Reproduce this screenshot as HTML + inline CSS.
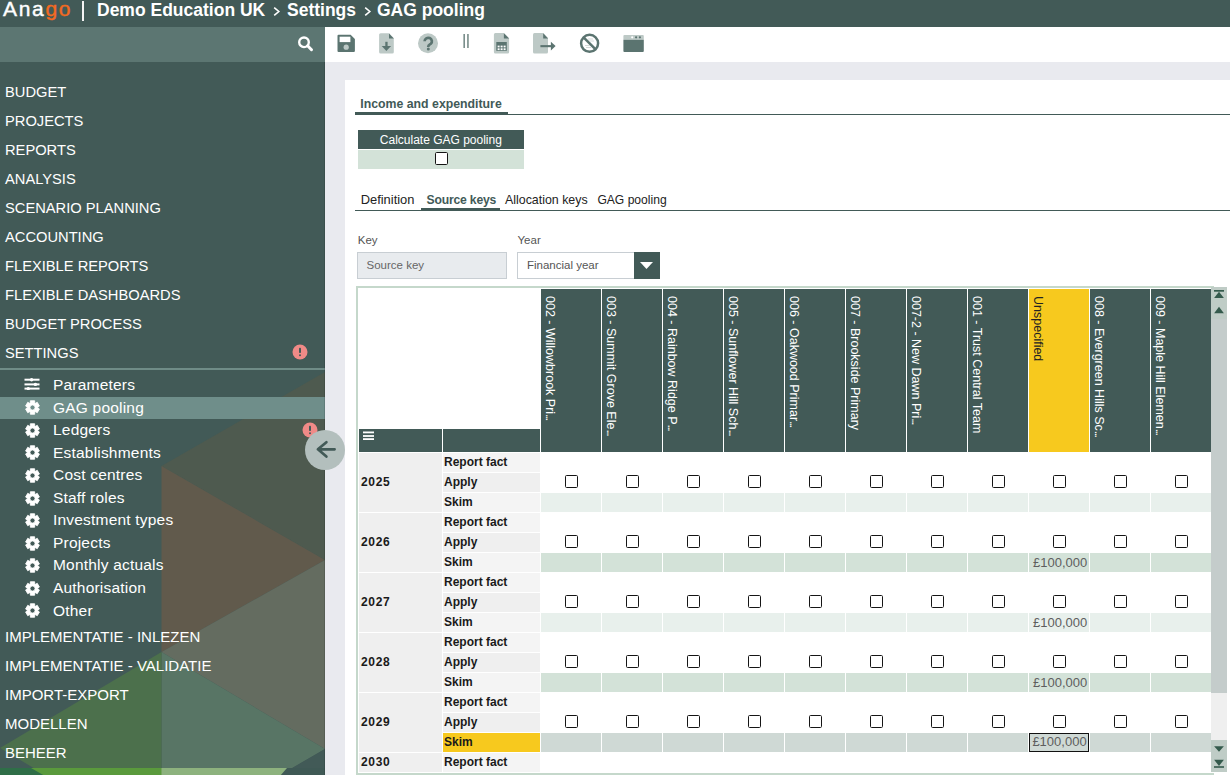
<!DOCTYPE html>
<html><head><meta charset="utf-8"><style>
*{box-sizing:border-box}
html,body{margin:0;padding:0}
body{width:1230px;height:775px;overflow:hidden;position:relative;font-family:"Liberation Sans",sans-serif;background:#fff;color:#222}
.a{position:absolute}
.t{position:absolute;white-space:nowrap;line-height:1}
.sx{transform-origin:0 0}
.cb{position:absolute;width:13px;height:13px;border:1.4px solid #151515;border-radius:1.6px;background:#fff}
</style></head><body>

<div class="a" style="left:0;top:0;width:1230px;height:27px;background:#425a57"></div>
<div class="t" style="left:3px;top:-2.24px;font-size:21.0px;font-weight:normal;color:#fff;letter-spacing:1.7px;-webkit-text-stroke:0.4px #fff">Ana<span style="color:#f26a22;-webkit-text-stroke:0.4px #f26a22">go</span></div>
<div class="a" style="left:82.3px;top:1.3px;width:1.8px;height:19.5px;background:#f4f4f4"></div>
<div class="t" style="left:97px;top:1.60px;font-size:17.5px;font-weight:bold;color:#fff;">Demo Education UK</div>
<svg class="a" style="left:272.5px;top:6px" width="8" height="11" viewBox="0 0 8 11"><path d="M1.2 1.6 L5.8 5.5 L1.2 9.4" fill="none" stroke="#fff" stroke-width="1.6"/></svg>
<div class="t" style="left:287px;top:1.60px;font-size:17.5px;font-weight:bold;color:#fff;">Settings</div>
<svg class="a" style="left:363.5px;top:6px" width="8" height="11" viewBox="0 0 8 11"><path d="M1.2 1.6 L5.8 5.5 L1.2 9.4" fill="none" stroke="#fff" stroke-width="1.6"/></svg>
<div class="t" style="left:377px;top:1.60px;font-size:17.5px;font-weight:bold;color:#fff;">GAG pooling</div>
<div class="a" style="left:0;top:27px;width:325px;height:748px;background:#425a57;overflow:hidden">
<svg class="a" style="left:0;top:-27px" width="325" height="775" viewBox="0 0 325 775">
<polygon points="161.5,466 325,372 325,560" fill="#4e5a4f"/>
<polygon points="161.5,466 325,560 161.5,652" fill="#615a4c"/>
<polygon points="161.5,652 325,560 325,749" fill="#646c60"/>
<polygon points="161.5,652 325,749 161.5,844" fill="#587565"/>
<polygon points="325,749 161.5,844 325,938" fill="#425a57"/>
<polygon points="161.5,652 0,748 161.5,844" fill="#4c704c"/>
<rect x="0" y="768" width="325" height="8" fill="#5a9a3c"/>
<polygon points="0,768 31,768 45,776 0,776" fill="#2f6e48"/>
<rect x="161.5" y="768" width="164" height="8" fill="#8db27e"/>
<polygon points="287,768 325,768 325,776 280,776" fill="#3f5955"/>
</svg>
</div>
<div class="a" style="left:0;top:27px;width:325px;height:35px;background:#5c7672"></div>
<svg class="a" style="left:294px;top:33px" width="22" height="22" viewBox="0 0 22 22"><circle cx="10" cy="9.3" r="4.8" fill="none" stroke="#fff" stroke-width="2.4"/><line x1="13.6" y1="12.8" x2="17.5" y2="16.7" stroke="#fff" stroke-width="3" stroke-linecap="round"/></svg>
<div class="t" style="left:5px;top:85.46px;font-size:14.7px;font-weight:normal;color:#fff;">BUDGET</div>
<div class="t" style="left:5px;top:114.46px;font-size:14.7px;font-weight:normal;color:#fff;">PROJECTS</div>
<div class="t" style="left:5px;top:143.46px;font-size:14.7px;font-weight:normal;color:#fff;">REPORTS</div>
<div class="t" style="left:5px;top:172.46px;font-size:14.7px;font-weight:normal;color:#fff;">ANALYSIS</div>
<div class="t" style="left:5px;top:201.46px;font-size:14.7px;font-weight:normal;color:#fff;">SCENARIO PLANNING</div>
<div class="t" style="left:5px;top:230.46px;font-size:14.7px;font-weight:normal;color:#fff;">ACCOUNTING</div>
<div class="t" style="left:5px;top:259.46px;font-size:14.7px;font-weight:normal;color:#fff;">FLEXIBLE REPORTS</div>
<div class="t" style="left:5px;top:288.46px;font-size:14.7px;font-weight:normal;color:#fff;">FLEXIBLE DASHBOARDS</div>
<div class="t" style="left:5px;top:317.46px;font-size:14.7px;font-weight:normal;color:#fff;">BUDGET PROCESS</div>
<div class="t" style="left:5px;top:346.46px;font-size:14.7px;font-weight:normal;color:#fff;">SETTINGS</div>
<svg class="a" style="left:292.3px;top:344.4px" width="16" height="16" viewBox="0 0 16 16"><circle cx="8" cy="8" r="7.5" fill="#f08a87"/><rect x="7" y="3.8" width="2" height="5.2" rx="0.8" fill="#425a57"/><rect x="7" y="10.2" width="2" height="2" rx="1" fill="#425a57"/></svg>
<div class="a" style="left:0;top:368px;width:325px;height:2px;background:#6f8c87"></div>
<div class="a" style="left:0;top:397px;width:325px;height:22px;background:#6f8e8a"></div>
<div class="t" style="left:53px;top:377.05px;font-size:15.5px;font-weight:normal;color:#fff;letter-spacing:0.2px">Parameters</div>
<svg class="a" style="left:24px;top:376.9px" width="16" height="13" viewBox="0 0 16 13"><g fill="#fff"><rect x="0.5" y="1.7" width="15" height="2"/><rect x="0.5" y="6.4" width="15" height="2"/><rect x="0.5" y="10.6" width="15" height="2"/><circle cx="7.6" cy="2.7" r="1.7"/><circle cx="11.4" cy="7.4" r="1.7"/><circle cx="4.3" cy="11.6" r="1.7"/></g></svg>
<div class="t" style="left:53px;top:399.60px;font-size:15.5px;font-weight:normal;color:#fff;letter-spacing:0.2px">GAG pooling</div>
<svg class="a" style="left:24.6px;top:400.3px" width="15" height="15" viewBox="0 0 14 14"><path fill="#fff" fill-rule="evenodd" stroke="#fff" stroke-width="0.8" stroke-linejoin="round" d="M11.97 7.57 L13.46 8.37 L11.42 11.90 L9.98 11.01 L8.99 11.59 L9.04 13.28 L4.96 13.28 L5.01 11.59 L4.02 11.01 L2.58 11.90 L0.54 8.37 L2.03 7.57 L2.03 6.43 L0.54 5.63 L2.58 2.10 L4.02 2.99 L5.01 2.41 L4.96 0.72 L9.04 0.72 L8.99 2.41 L9.98 2.99 L11.42 2.10 L13.46 5.63 L11.97 6.43Z M9.40 7.00 a2.4 2.4 0 1 0 -4.80 0 a2.4 2.4 0 1 0 4.80 0Z"/></svg>
<div class="t" style="left:53px;top:422.15px;font-size:15.5px;font-weight:normal;color:#fff;letter-spacing:0.2px">Ledgers</div>
<svg class="a" style="left:24.6px;top:422.9px" width="15" height="15" viewBox="0 0 14 14"><path fill="#fff" fill-rule="evenodd" stroke="#fff" stroke-width="0.8" stroke-linejoin="round" d="M11.97 7.57 L13.46 8.37 L11.42 11.90 L9.98 11.01 L8.99 11.59 L9.04 13.28 L4.96 13.28 L5.01 11.59 L4.02 11.01 L2.58 11.90 L0.54 8.37 L2.03 7.57 L2.03 6.43 L0.54 5.63 L2.58 2.10 L4.02 2.99 L5.01 2.41 L4.96 0.72 L9.04 0.72 L8.99 2.41 L9.98 2.99 L11.42 2.10 L13.46 5.63 L11.97 6.43Z M9.40 7.00 a2.4 2.4 0 1 0 -4.80 0 a2.4 2.4 0 1 0 4.80 0Z"/></svg>
<div class="t" style="left:53px;top:444.70px;font-size:15.5px;font-weight:normal;color:#fff;letter-spacing:0.2px">Establishments</div>
<svg class="a" style="left:24.6px;top:445.4px" width="15" height="15" viewBox="0 0 14 14"><path fill="#fff" fill-rule="evenodd" stroke="#fff" stroke-width="0.8" stroke-linejoin="round" d="M11.97 7.57 L13.46 8.37 L11.42 11.90 L9.98 11.01 L8.99 11.59 L9.04 13.28 L4.96 13.28 L5.01 11.59 L4.02 11.01 L2.58 11.90 L0.54 8.37 L2.03 7.57 L2.03 6.43 L0.54 5.63 L2.58 2.10 L4.02 2.99 L5.01 2.41 L4.96 0.72 L9.04 0.72 L8.99 2.41 L9.98 2.99 L11.42 2.10 L13.46 5.63 L11.97 6.43Z M9.40 7.00 a2.4 2.4 0 1 0 -4.80 0 a2.4 2.4 0 1 0 4.80 0Z"/></svg>
<div class="t" style="left:53px;top:467.25px;font-size:15.5px;font-weight:normal;color:#fff;letter-spacing:0.2px">Cost centres</div>
<svg class="a" style="left:24.6px;top:468.0px" width="15" height="15" viewBox="0 0 14 14"><path fill="#fff" fill-rule="evenodd" stroke="#fff" stroke-width="0.8" stroke-linejoin="round" d="M11.97 7.57 L13.46 8.37 L11.42 11.90 L9.98 11.01 L8.99 11.59 L9.04 13.28 L4.96 13.28 L5.01 11.59 L4.02 11.01 L2.58 11.90 L0.54 8.37 L2.03 7.57 L2.03 6.43 L0.54 5.63 L2.58 2.10 L4.02 2.99 L5.01 2.41 L4.96 0.72 L9.04 0.72 L8.99 2.41 L9.98 2.99 L11.42 2.10 L13.46 5.63 L11.97 6.43Z M9.40 7.00 a2.4 2.4 0 1 0 -4.80 0 a2.4 2.4 0 1 0 4.80 0Z"/></svg>
<div class="t" style="left:53px;top:489.80px;font-size:15.5px;font-weight:normal;color:#fff;letter-spacing:0.2px">Staff roles</div>
<svg class="a" style="left:24.6px;top:490.5px" width="15" height="15" viewBox="0 0 14 14"><path fill="#fff" fill-rule="evenodd" stroke="#fff" stroke-width="0.8" stroke-linejoin="round" d="M11.97 7.57 L13.46 8.37 L11.42 11.90 L9.98 11.01 L8.99 11.59 L9.04 13.28 L4.96 13.28 L5.01 11.59 L4.02 11.01 L2.58 11.90 L0.54 8.37 L2.03 7.57 L2.03 6.43 L0.54 5.63 L2.58 2.10 L4.02 2.99 L5.01 2.41 L4.96 0.72 L9.04 0.72 L8.99 2.41 L9.98 2.99 L11.42 2.10 L13.46 5.63 L11.97 6.43Z M9.40 7.00 a2.4 2.4 0 1 0 -4.80 0 a2.4 2.4 0 1 0 4.80 0Z"/></svg>
<div class="t" style="left:53px;top:512.35px;font-size:15.5px;font-weight:normal;color:#fff;letter-spacing:0.2px">Investment types</div>
<svg class="a" style="left:24.6px;top:513.1px" width="15" height="15" viewBox="0 0 14 14"><path fill="#fff" fill-rule="evenodd" stroke="#fff" stroke-width="0.8" stroke-linejoin="round" d="M11.97 7.57 L13.46 8.37 L11.42 11.90 L9.98 11.01 L8.99 11.59 L9.04 13.28 L4.96 13.28 L5.01 11.59 L4.02 11.01 L2.58 11.90 L0.54 8.37 L2.03 7.57 L2.03 6.43 L0.54 5.63 L2.58 2.10 L4.02 2.99 L5.01 2.41 L4.96 0.72 L9.04 0.72 L8.99 2.41 L9.98 2.99 L11.42 2.10 L13.46 5.63 L11.97 6.43Z M9.40 7.00 a2.4 2.4 0 1 0 -4.80 0 a2.4 2.4 0 1 0 4.80 0Z"/></svg>
<div class="t" style="left:53px;top:534.90px;font-size:15.5px;font-weight:normal;color:#fff;letter-spacing:0.2px">Projects</div>
<svg class="a" style="left:24.6px;top:535.6px" width="15" height="15" viewBox="0 0 14 14"><path fill="#fff" fill-rule="evenodd" stroke="#fff" stroke-width="0.8" stroke-linejoin="round" d="M11.97 7.57 L13.46 8.37 L11.42 11.90 L9.98 11.01 L8.99 11.59 L9.04 13.28 L4.96 13.28 L5.01 11.59 L4.02 11.01 L2.58 11.90 L0.54 8.37 L2.03 7.57 L2.03 6.43 L0.54 5.63 L2.58 2.10 L4.02 2.99 L5.01 2.41 L4.96 0.72 L9.04 0.72 L8.99 2.41 L9.98 2.99 L11.42 2.10 L13.46 5.63 L11.97 6.43Z M9.40 7.00 a2.4 2.4 0 1 0 -4.80 0 a2.4 2.4 0 1 0 4.80 0Z"/></svg>
<div class="t" style="left:53px;top:557.45px;font-size:15.5px;font-weight:normal;color:#fff;letter-spacing:0.2px">Monthly actuals</div>
<svg class="a" style="left:24.6px;top:558.2px" width="15" height="15" viewBox="0 0 14 14"><path fill="#fff" fill-rule="evenodd" stroke="#fff" stroke-width="0.8" stroke-linejoin="round" d="M11.97 7.57 L13.46 8.37 L11.42 11.90 L9.98 11.01 L8.99 11.59 L9.04 13.28 L4.96 13.28 L5.01 11.59 L4.02 11.01 L2.58 11.90 L0.54 8.37 L2.03 7.57 L2.03 6.43 L0.54 5.63 L2.58 2.10 L4.02 2.99 L5.01 2.41 L4.96 0.72 L9.04 0.72 L8.99 2.41 L9.98 2.99 L11.42 2.10 L13.46 5.63 L11.97 6.43Z M9.40 7.00 a2.4 2.4 0 1 0 -4.80 0 a2.4 2.4 0 1 0 4.80 0Z"/></svg>
<div class="t" style="left:53px;top:580.00px;font-size:15.5px;font-weight:normal;color:#fff;letter-spacing:0.2px">Authorisation</div>
<svg class="a" style="left:24.6px;top:580.8px" width="15" height="15" viewBox="0 0 14 14"><path fill="#fff" fill-rule="evenodd" stroke="#fff" stroke-width="0.8" stroke-linejoin="round" d="M11.97 7.57 L13.46 8.37 L11.42 11.90 L9.98 11.01 L8.99 11.59 L9.04 13.28 L4.96 13.28 L5.01 11.59 L4.02 11.01 L2.58 11.90 L0.54 8.37 L2.03 7.57 L2.03 6.43 L0.54 5.63 L2.58 2.10 L4.02 2.99 L5.01 2.41 L4.96 0.72 L9.04 0.72 L8.99 2.41 L9.98 2.99 L11.42 2.10 L13.46 5.63 L11.97 6.43Z M9.40 7.00 a2.4 2.4 0 1 0 -4.80 0 a2.4 2.4 0 1 0 4.80 0Z"/></svg>
<div class="t" style="left:53px;top:602.55px;font-size:15.5px;font-weight:normal;color:#fff;letter-spacing:0.2px">Other</div>
<svg class="a" style="left:24.6px;top:603.3px" width="15" height="15" viewBox="0 0 14 14"><path fill="#fff" fill-rule="evenodd" stroke="#fff" stroke-width="0.8" stroke-linejoin="round" d="M11.97 7.57 L13.46 8.37 L11.42 11.90 L9.98 11.01 L8.99 11.59 L9.04 13.28 L4.96 13.28 L5.01 11.59 L4.02 11.01 L2.58 11.90 L0.54 8.37 L2.03 7.57 L2.03 6.43 L0.54 5.63 L2.58 2.10 L4.02 2.99 L5.01 2.41 L4.96 0.72 L9.04 0.72 L8.99 2.41 L9.98 2.99 L11.42 2.10 L13.46 5.63 L11.97 6.43Z M9.40 7.00 a2.4 2.4 0 1 0 -4.80 0 a2.4 2.4 0 1 0 4.80 0Z"/></svg>
<svg class="a" style="left:302.2px;top:421.5px" width="16" height="16" viewBox="0 0 16 16"><circle cx="8" cy="8" r="7.5" fill="#f08a87"/><rect x="7" y="3.8" width="2" height="5.2" rx="0.8" fill="#425a57"/><rect x="7" y="10.2" width="2" height="2" rx="1" fill="#425a57"/></svg>
<div class="t" style="left:5px;top:629.26px;font-size:15.0px;font-weight:normal;color:#fff;">IMPLEMENTATIE - INLEZEN</div>
<div class="t" style="left:5px;top:658.26px;font-size:15.0px;font-weight:normal;color:#fff;">IMPLEMENTATIE - VALIDATIE</div>
<div class="t" style="left:5px;top:687.26px;font-size:15.0px;font-weight:normal;color:#fff;">IMPORT-EXPORT</div>
<div class="t" style="left:5px;top:716.26px;font-size:15.0px;font-weight:normal;color:#fff;">MODELLEN</div>
<div class="t" style="left:5px;top:745.26px;font-size:15.0px;font-weight:normal;color:#fff;">BEHEER</div>
<div class="a" style="left:324px;top:62px;width:1px;height:713px;background:rgba(0,0,0,0.12)"></div>
<div class="a" style="left:325px;top:62px;width:905px;height:713px;background:#e9eaef"></div>
<div class="a" style="left:345px;top:80px;width:885px;height:695px;background:#fff"></div>
<svg class="a" style="left:325px;top:27px" width="340" height="35" viewBox="325 27 340 35">
<path d="M338.5 34.8 H350.6 L354.9 39 V51 a1 1 0 0 1 -1 1 H338.5 a1 1 0 0 1 -1 -1 V35.8 a1 1 0 0 1 1 -1z" fill="#5b7470"/>
<rect x="339.6" y="36.7" width="10.8" height="5.4" fill="#fff"/>
<circle cx="346.2" cy="47.2" r="2.6" fill="#bdc9c6"/>
<path d="M380.6 33.2 H389 L393.8 38.2 V52.1 a1.5 1.5 0 0 1 -1.5 1.5 H380.6 a1.5 1.5 0 0 1 -1.5 -1.5 V34.7 a1.5 1.5 0 0 1 1.5 -1.5z" fill="#bdc9c6"/>
<path d="M389 33.4 V38.6 H393.8z" fill="#5b7470"/>
<rect x="385.3" y="41.8" width="2.3" height="4.6" fill="#5b7470"/>
<path d="M381.7 46.1 H391.1 L386.4 50.9z" fill="#5b7470"/>
<circle cx="428" cy="43.3" r="10" fill="#bdc9c6"/>
<rect x="463.5" y="34" width="1.3" height="14" fill="#5b7470"/>
<rect x="467.3" y="34" width="1.3" height="14" fill="#5b7470"/>
<path d="M495.4 33.1 H503.9 L509.1 38.3 V52.1 a1.5 1.5 0 0 1 -1.5 1.5 H495.4 a1.5 1.5 0 0 1 -1.5 -1.5 V34.6 a1.5 1.5 0 0 1 1.5 -1.5z" fill="#bdc9c6"/>
<path d="M503.9 33.3 V38.5 H509.1z" fill="#5b7470"/>
<rect x="496.3" y="42" width="10.5" height="8.8" fill="#5b7470"/>
<g fill="#fff"><rect x="497.6" y="45.6" width="2" height="1.8"/><rect x="500.6" y="45.6" width="2" height="1.8"/><rect x="503.6" y="45.6" width="2" height="1.8"/><rect x="497.6" y="48.3" width="2" height="1.8"/><rect x="500.6" y="48.3" width="2" height="1.8"/><rect x="503.6" y="48.3" width="2" height="1.8"/></g>
<path d="M534.5 33.1 H543.2 L548 38.1 V52.1 a1.5 1.5 0 0 1 -1.5 1.5 H534.5 a1.5 1.5 0 0 1 -1.5 -1.5 V34.6 a1.5 1.5 0 0 1 1.5 -1.5z" fill="#bdc9c6"/>
<path d="M543.2 33.3 V38.5 H548z" fill="#5b7470"/>
<rect x="540.4" y="45.1" width="10.8" height="2.1" fill="#5b7470"/>
<path d="M550.9 41.7 L555.6 46.1 L550.9 50.5z" fill="#5b7470"/>
<circle cx="589.6" cy="43.3" r="8.5" fill="none" stroke="#5b7470" stroke-width="2.5"/>
<line x1="583.6" y1="37.3" x2="595.6" y2="49.3" stroke="#5b7470" stroke-width="2.5"/>
<g stroke="#c9d1cf" stroke-width="0.8"><line x1="588" y1="39" x2="593" y2="39"/><line x1="589" y1="41" x2="594" y2="41"/><line x1="585" y1="45.5" x2="590" y2="45.5"/><line x1="586" y1="47.5" x2="591" y2="47.5"/></g>
<path d="M624.4 34.9 H642.8 a1 1 0 0 1 1 1 V39.8 H623.4 V35.9 a1 1 0 0 1 1 -1z" fill="#bdc9c6"/>
<path d="M623.4 39.8 H643.8 V50.9 a1 1 0 0 1 -1 1 H624.4 a1 1 0 0 1 -1 -1z" fill="#5b7470"/>
<circle cx="632.2" cy="37.3" r="1.1" fill="#fff"/><circle cx="636.1" cy="37.3" r="1.1" fill="#5b7470"/><circle cx="639.9" cy="37.3" r="1.1" fill="#5b7470"/>
</svg>
<svg class="a" style="left:418px;top:33px" width="20" height="20" viewBox="418 33 20 20"><path d="M424.6 41.2 a3.65 3.5 0 1 1 6.2 2.6 c-1.1 0.9 -2.5 1.2 -2.5 2.8 v0.3" fill="none" stroke="#5b7470" stroke-width="2.7"/><circle cx="428.3" cy="49" r="1.5" fill="#5b7470"/></svg>
<div class="t" style="left:360.3px;top:97.80px;font-size:12.3px;font-weight:bold;color:#425a57;">Income and expenditure</div>
<div class="a" style="left:355px;top:114px;width:875px;height:1px;background:#425a57"></div>
<div class="a" style="left:355px;top:112px;width:153px;height:3px;background:#425a57"></div>
<div class="a" style="left:358px;top:130px;width:166px;height:19px;background:#425a57"></div>
<div class="t" style="left:379.8px;top:133.66px;font-size:12.0px;font-weight:normal;color:#fff;">Calculate GAG pooling</div>
<div class="a" style="left:358px;top:150px;width:166px;height:19px;background:#d3e2d8"></div>
<div class="cb" style="left:435px;top:152px"></div>
<div class="t" style="left:360.7px;top:194.06px;font-size:12.9px;font-weight:normal;color:#222;">Definition</div>
<div class="t" style="left:426.5px;top:193.89px;font-size:12.2px;font-weight:bold;color:#425a57;letter-spacing:-0.2px">Source keys</div>
<div class="t" style="left:505px;top:194.06px;font-size:12.4px;font-weight:normal;color:#222;">Allocation keys</div>
<div class="t" style="left:597.4px;top:194.06px;font-size:12.1px;font-weight:normal;color:#222;">GAG pooling</div>
<div class="a" style="left:355px;top:210px;width:875px;height:1px;background:#425a57"></div>
<div class="a" style="left:421px;top:208px;width:78.5px;height:3px;background:#425a57"></div>
<div class="t" style="left:357.8px;top:234.80px;font-size:11.5px;font-weight:normal;color:#555;">Key</div>
<div class="t" style="left:517.5px;top:234.80px;font-size:11.5px;font-weight:normal;color:#555;">Year</div>
<div class="a" style="left:357px;top:252px;width:150px;height:27px;background:#e8ebee;border:1px solid #c8ced3"></div>
<div class="t" style="left:366.5px;top:260.00px;font-size:11.5px;font-weight:normal;color:#666;">Source key</div>
<div class="a" style="left:517px;top:252px;width:143px;height:27px;background:#fff;border:1px solid #c8ced3"></div>
<div class="t" style="left:527px;top:260.00px;font-size:11.5px;font-weight:normal;color:#555;">Financial year</div>
<div class="a" style="left:633.5px;top:252px;width:26px;height:27px;background:#425a57"></div>
<svg class="a" style="left:639px;top:261px" width="15" height="9" viewBox="0 0 15 9"><path d="M1 1 H14 L7.5 8z" fill="#fff"/></svg>
<div class="a" style="left:356px;top:286px;width:858px;height:489px;border:2px solid #c5d8cb;border-right:none;background:#fff"></div>
<div class="a" style="left:359px;top:429px;width:83px;height:23px;background:#425a57"></div>
<div class="a" style="left:443px;top:429px;width:97px;height:23px;background:#425a57"></div>
<svg class="a" style="left:363px;top:431px" width="12" height="10" viewBox="0 0 12 10"><rect x="0" y="0.5" width="11" height="1.8" fill="#fff"/><rect x="0" y="4.1" width="11" height="1.8" fill="#fff"/><rect x="0" y="7.2" width="11" height="1.8" fill="#fff"/></svg>
<div class="a" style="left:541px;top:289px;width:60px;height:163px;background:#425a57"></div>
<div class="t" style="left:555.5px;top:296px;font-size:12.5px;color:#fff;transform-origin:0 0;transform:rotate(90deg)">002 - Willowbrook Pri<span style="letter-spacing:-1.6px">...</span></div>
<div class="a" style="left:602px;top:289px;width:60px;height:163px;background:#425a57"></div>
<div class="t" style="left:616.5px;top:296px;font-size:12.5px;color:#fff;transform-origin:0 0;transform:rotate(90deg)">003 - Summit Grove Ele<span style="letter-spacing:-1.6px">...</span></div>
<div class="a" style="left:663px;top:289px;width:60px;height:163px;background:#425a57"></div>
<div class="t" style="left:677.5px;top:296px;font-size:12.5px;color:#fff;transform-origin:0 0;transform:rotate(90deg)">004 - Rainbow Ridge P<span style="letter-spacing:-1.6px">...</span></div>
<div class="a" style="left:724px;top:289px;width:60px;height:163px;background:#425a57"></div>
<div class="t" style="left:738.5px;top:296px;font-size:12.5px;color:#fff;transform-origin:0 0;transform:rotate(90deg)">005 - Sunflower Hill Sch<span style="letter-spacing:-1.6px">...</span></div>
<div class="a" style="left:785px;top:289px;width:60px;height:163px;background:#425a57"></div>
<div class="t" style="left:799.5px;top:296px;font-size:12.5px;color:#fff;transform-origin:0 0;transform:rotate(90deg)">006 - Oakwood Primar<span style="letter-spacing:-1.6px">...</span></div>
<div class="a" style="left:846px;top:289px;width:60px;height:163px;background:#425a57"></div>
<div class="t" style="left:860.5px;top:296px;font-size:12.5px;color:#fff;transform-origin:0 0;transform:rotate(90deg)">007 - Brookside Primary</div>
<div class="a" style="left:907px;top:289px;width:60px;height:163px;background:#425a57"></div>
<div class="t" style="left:921.5px;top:296px;font-size:12.5px;color:#fff;transform-origin:0 0;transform:rotate(90deg)">007-2 - New Dawn Pri<span style="letter-spacing:-1.6px">...</span></div>
<div class="a" style="left:968px;top:289px;width:60px;height:163px;background:#425a57"></div>
<div class="t" style="left:982.5px;top:296px;font-size:12.5px;color:#fff;transform-origin:0 0;transform:rotate(90deg)">001 - Trust Central Team</div>
<div class="a" style="left:1029px;top:289px;width:60px;height:163px;background:#f7c91e"></div>
<div class="t" style="left:1043.5px;top:296px;font-size:12.5px;color:#222;transform-origin:0 0;transform:rotate(90deg)">Unspecified</div>
<div class="a" style="left:1090px;top:289px;width:60px;height:163px;background:#425a57"></div>
<div class="t" style="left:1104.5px;top:296px;font-size:12.5px;color:#fff;transform-origin:0 0;transform:rotate(90deg)">008 - Evergreen Hills Sc<span style="letter-spacing:-1.6px">...</span></div>
<div class="a" style="left:1151px;top:289px;width:60px;height:163px;background:#425a57"></div>
<div class="t" style="left:1165.5px;top:296px;font-size:12.5px;color:#fff;transform-origin:0 0;transform:rotate(90deg)">009 - Maple Hill Elemen<span style="letter-spacing:-1.6px">...</span></div>
<div class="a" style="left:359px;top:453px;width:83px;height:59px;background:#efefef"></div>
<div class="t" style="left:361px;top:476.49px;font-size:12.0px;font-weight:bold;color:#1a1a1a;letter-spacing:0.7px">2025</div>
<div class="a" style="left:443px;top:453px;width:97px;height:19px;background:#f4f4f4"></div>
<div class="t" style="left:444px;top:456.49px;font-size:12.0px;font-weight:bold;color:#1a1a1a;">Report fact</div>
<div class="a" style="left:443px;top:473px;width:97px;height:19px;background:#efefef"></div>
<div class="t" style="left:444px;top:476.49px;font-size:12.0px;font-weight:bold;color:#1a1a1a;">Apply</div>
<div class="cb" style="left:565px;top:475px"></div>
<div class="cb" style="left:626px;top:475px"></div>
<div class="cb" style="left:687px;top:475px"></div>
<div class="cb" style="left:748px;top:475px"></div>
<div class="cb" style="left:809px;top:475px"></div>
<div class="cb" style="left:870px;top:475px"></div>
<div class="cb" style="left:931px;top:475px"></div>
<div class="cb" style="left:992px;top:475px"></div>
<div class="cb" style="left:1053px;top:475px"></div>
<div class="cb" style="left:1114px;top:475px"></div>
<div class="cb" style="left:1175px;top:475px"></div>
<div class="a" style="left:443px;top:493px;width:97px;height:19px;background:#f4f4f4"></div>
<div class="t" style="left:444px;top:496.49px;font-size:12.0px;font-weight:bold;color:#1a1a1a;">Skim</div>
<div class="a" style="left:541px;top:493px;width:60px;height:19px;background:#e8f0ec"></div>
<div class="a" style="left:602px;top:493px;width:60px;height:19px;background:#e8f0ec"></div>
<div class="a" style="left:663px;top:493px;width:60px;height:19px;background:#e8f0ec"></div>
<div class="a" style="left:724px;top:493px;width:60px;height:19px;background:#e8f0ec"></div>
<div class="a" style="left:785px;top:493px;width:60px;height:19px;background:#e8f0ec"></div>
<div class="a" style="left:846px;top:493px;width:60px;height:19px;background:#e8f0ec"></div>
<div class="a" style="left:907px;top:493px;width:60px;height:19px;background:#e8f0ec"></div>
<div class="a" style="left:968px;top:493px;width:60px;height:19px;background:#e8f0ec"></div>
<div class="a" style="left:1029px;top:493px;width:60px;height:19px;background:#e8f0ec"></div>
<div class="a" style="left:1090px;top:493px;width:60px;height:19px;background:#e8f0ec"></div>
<div class="a" style="left:1151px;top:493px;width:60px;height:19px;background:#e8f0ec"></div>
<div class="a" style="left:359px;top:513px;width:83px;height:59px;background:#efefef"></div>
<div class="t" style="left:361px;top:536.49px;font-size:12.0px;font-weight:bold;color:#1a1a1a;letter-spacing:0.7px">2026</div>
<div class="a" style="left:443px;top:513px;width:97px;height:19px;background:#f4f4f4"></div>
<div class="t" style="left:444px;top:516.49px;font-size:12.0px;font-weight:bold;color:#1a1a1a;">Report fact</div>
<div class="a" style="left:443px;top:533px;width:97px;height:19px;background:#efefef"></div>
<div class="t" style="left:444px;top:536.49px;font-size:12.0px;font-weight:bold;color:#1a1a1a;">Apply</div>
<div class="cb" style="left:565px;top:535px"></div>
<div class="cb" style="left:626px;top:535px"></div>
<div class="cb" style="left:687px;top:535px"></div>
<div class="cb" style="left:748px;top:535px"></div>
<div class="cb" style="left:809px;top:535px"></div>
<div class="cb" style="left:870px;top:535px"></div>
<div class="cb" style="left:931px;top:535px"></div>
<div class="cb" style="left:992px;top:535px"></div>
<div class="cb" style="left:1053px;top:535px"></div>
<div class="cb" style="left:1114px;top:535px"></div>
<div class="cb" style="left:1175px;top:535px"></div>
<div class="a" style="left:443px;top:553px;width:97px;height:19px;background:#f4f4f4"></div>
<div class="t" style="left:444px;top:556.49px;font-size:12.0px;font-weight:bold;color:#1a1a1a;">Skim</div>
<div class="a" style="left:541px;top:553px;width:60px;height:19px;background:#d3e2d8"></div>
<div class="a" style="left:602px;top:553px;width:60px;height:19px;background:#d3e2d8"></div>
<div class="a" style="left:663px;top:553px;width:60px;height:19px;background:#d3e2d8"></div>
<div class="a" style="left:724px;top:553px;width:60px;height:19px;background:#d3e2d8"></div>
<div class="a" style="left:785px;top:553px;width:60px;height:19px;background:#d3e2d8"></div>
<div class="a" style="left:846px;top:553px;width:60px;height:19px;background:#d3e2d8"></div>
<div class="a" style="left:907px;top:553px;width:60px;height:19px;background:#d3e2d8"></div>
<div class="a" style="left:968px;top:553px;width:60px;height:19px;background:#d3e2d8"></div>
<div class="a" style="left:1029px;top:553px;width:60px;height:19px;background:#d3e2d8"></div>
<div class="a" style="left:1090px;top:553px;width:60px;height:19px;background:#d3e2d8"></div>
<div class="a" style="left:1151px;top:553px;width:60px;height:19px;background:#d3e2d8"></div>
<div class="a" style="left:1029px;top:553px;width:60px;height:19px;overflow:hidden"><div class="t" style="left:4px;top:2.7px;font-size:13px;color:#5e5e5e">£100,000</div></div>
<div class="a" style="left:359px;top:573px;width:83px;height:59px;background:#efefef"></div>
<div class="t" style="left:361px;top:596.49px;font-size:12.0px;font-weight:bold;color:#1a1a1a;letter-spacing:0.7px">2027</div>
<div class="a" style="left:443px;top:573px;width:97px;height:19px;background:#f4f4f4"></div>
<div class="t" style="left:444px;top:576.49px;font-size:12.0px;font-weight:bold;color:#1a1a1a;">Report fact</div>
<div class="a" style="left:443px;top:593px;width:97px;height:19px;background:#efefef"></div>
<div class="t" style="left:444px;top:596.49px;font-size:12.0px;font-weight:bold;color:#1a1a1a;">Apply</div>
<div class="cb" style="left:565px;top:595px"></div>
<div class="cb" style="left:626px;top:595px"></div>
<div class="cb" style="left:687px;top:595px"></div>
<div class="cb" style="left:748px;top:595px"></div>
<div class="cb" style="left:809px;top:595px"></div>
<div class="cb" style="left:870px;top:595px"></div>
<div class="cb" style="left:931px;top:595px"></div>
<div class="cb" style="left:992px;top:595px"></div>
<div class="cb" style="left:1053px;top:595px"></div>
<div class="cb" style="left:1114px;top:595px"></div>
<div class="cb" style="left:1175px;top:595px"></div>
<div class="a" style="left:443px;top:613px;width:97px;height:19px;background:#f4f4f4"></div>
<div class="t" style="left:444px;top:616.49px;font-size:12.0px;font-weight:bold;color:#1a1a1a;">Skim</div>
<div class="a" style="left:541px;top:613px;width:60px;height:19px;background:#e8f0ec"></div>
<div class="a" style="left:602px;top:613px;width:60px;height:19px;background:#e8f0ec"></div>
<div class="a" style="left:663px;top:613px;width:60px;height:19px;background:#e8f0ec"></div>
<div class="a" style="left:724px;top:613px;width:60px;height:19px;background:#e8f0ec"></div>
<div class="a" style="left:785px;top:613px;width:60px;height:19px;background:#e8f0ec"></div>
<div class="a" style="left:846px;top:613px;width:60px;height:19px;background:#e8f0ec"></div>
<div class="a" style="left:907px;top:613px;width:60px;height:19px;background:#e8f0ec"></div>
<div class="a" style="left:968px;top:613px;width:60px;height:19px;background:#e8f0ec"></div>
<div class="a" style="left:1029px;top:613px;width:60px;height:19px;background:#e8f0ec"></div>
<div class="a" style="left:1090px;top:613px;width:60px;height:19px;background:#e8f0ec"></div>
<div class="a" style="left:1151px;top:613px;width:60px;height:19px;background:#e8f0ec"></div>
<div class="a" style="left:1029px;top:613px;width:60px;height:19px;overflow:hidden"><div class="t" style="left:4px;top:2.7px;font-size:13px;color:#5e5e5e">£100,000</div></div>
<div class="a" style="left:359px;top:633px;width:83px;height:59px;background:#efefef"></div>
<div class="t" style="left:361px;top:656.49px;font-size:12.0px;font-weight:bold;color:#1a1a1a;letter-spacing:0.7px">2028</div>
<div class="a" style="left:443px;top:633px;width:97px;height:19px;background:#f4f4f4"></div>
<div class="t" style="left:444px;top:636.49px;font-size:12.0px;font-weight:bold;color:#1a1a1a;">Report fact</div>
<div class="a" style="left:443px;top:653px;width:97px;height:19px;background:#efefef"></div>
<div class="t" style="left:444px;top:656.49px;font-size:12.0px;font-weight:bold;color:#1a1a1a;">Apply</div>
<div class="cb" style="left:565px;top:655px"></div>
<div class="cb" style="left:626px;top:655px"></div>
<div class="cb" style="left:687px;top:655px"></div>
<div class="cb" style="left:748px;top:655px"></div>
<div class="cb" style="left:809px;top:655px"></div>
<div class="cb" style="left:870px;top:655px"></div>
<div class="cb" style="left:931px;top:655px"></div>
<div class="cb" style="left:992px;top:655px"></div>
<div class="cb" style="left:1053px;top:655px"></div>
<div class="cb" style="left:1114px;top:655px"></div>
<div class="cb" style="left:1175px;top:655px"></div>
<div class="a" style="left:443px;top:673px;width:97px;height:19px;background:#f4f4f4"></div>
<div class="t" style="left:444px;top:676.49px;font-size:12.0px;font-weight:bold;color:#1a1a1a;">Skim</div>
<div class="a" style="left:541px;top:673px;width:60px;height:19px;background:#d3e2d8"></div>
<div class="a" style="left:602px;top:673px;width:60px;height:19px;background:#d3e2d8"></div>
<div class="a" style="left:663px;top:673px;width:60px;height:19px;background:#d3e2d8"></div>
<div class="a" style="left:724px;top:673px;width:60px;height:19px;background:#d3e2d8"></div>
<div class="a" style="left:785px;top:673px;width:60px;height:19px;background:#d3e2d8"></div>
<div class="a" style="left:846px;top:673px;width:60px;height:19px;background:#d3e2d8"></div>
<div class="a" style="left:907px;top:673px;width:60px;height:19px;background:#d3e2d8"></div>
<div class="a" style="left:968px;top:673px;width:60px;height:19px;background:#d3e2d8"></div>
<div class="a" style="left:1029px;top:673px;width:60px;height:19px;background:#d3e2d8"></div>
<div class="a" style="left:1090px;top:673px;width:60px;height:19px;background:#d3e2d8"></div>
<div class="a" style="left:1151px;top:673px;width:60px;height:19px;background:#d3e2d8"></div>
<div class="a" style="left:1029px;top:673px;width:60px;height:19px;overflow:hidden"><div class="t" style="left:4px;top:2.7px;font-size:13px;color:#5e5e5e">£100,000</div></div>
<div class="a" style="left:359px;top:693px;width:83px;height:59px;background:#efefef"></div>
<div class="t" style="left:361px;top:716.49px;font-size:12.0px;font-weight:bold;color:#1a1a1a;letter-spacing:0.7px">2029</div>
<div class="a" style="left:443px;top:693px;width:97px;height:19px;background:#f4f4f4"></div>
<div class="t" style="left:444px;top:696.49px;font-size:12.0px;font-weight:bold;color:#1a1a1a;">Report fact</div>
<div class="a" style="left:443px;top:713px;width:97px;height:19px;background:#efefef"></div>
<div class="t" style="left:444px;top:716.49px;font-size:12.0px;font-weight:bold;color:#1a1a1a;">Apply</div>
<div class="cb" style="left:565px;top:715px"></div>
<div class="cb" style="left:626px;top:715px"></div>
<div class="cb" style="left:687px;top:715px"></div>
<div class="cb" style="left:748px;top:715px"></div>
<div class="cb" style="left:809px;top:715px"></div>
<div class="cb" style="left:870px;top:715px"></div>
<div class="cb" style="left:931px;top:715px"></div>
<div class="cb" style="left:992px;top:715px"></div>
<div class="cb" style="left:1053px;top:715px"></div>
<div class="cb" style="left:1114px;top:715px"></div>
<div class="cb" style="left:1175px;top:715px"></div>
<div class="a" style="left:443px;top:733px;width:97px;height:19px;background:#f7c91e"></div>
<div class="t" style="left:444px;top:736.49px;font-size:12.0px;font-weight:bold;color:#1a1a1a;">Skim</div>
<div class="a" style="left:541px;top:733px;width:60px;height:19px;background:#cfd9d5"></div>
<div class="a" style="left:602px;top:733px;width:60px;height:19px;background:#cfd9d5"></div>
<div class="a" style="left:663px;top:733px;width:60px;height:19px;background:#cfd9d5"></div>
<div class="a" style="left:724px;top:733px;width:60px;height:19px;background:#cfd9d5"></div>
<div class="a" style="left:785px;top:733px;width:60px;height:19px;background:#cfd9d5"></div>
<div class="a" style="left:846px;top:733px;width:60px;height:19px;background:#cfd9d5"></div>
<div class="a" style="left:907px;top:733px;width:60px;height:19px;background:#cfd9d5"></div>
<div class="a" style="left:968px;top:733px;width:60px;height:19px;background:#cfd9d5"></div>
<div class="a" style="left:1029px;top:733px;width:60px;height:19px;background:#cfd9d5"></div>
<div class="a" style="left:1090px;top:733px;width:60px;height:19px;background:#cfd9d5"></div>
<div class="a" style="left:1151px;top:733px;width:60px;height:19px;background:#cfd9d5"></div>
<div class="a" style="left:1029px;top:733px;width:60px;height:19px;border:1.6px solid #111;overflow:hidden"><div class="t" style="left:2.4px;top:1.1px;font-size:13px;color:#5e5e5e">£100,000</div></div>
<div class="a" style="left:359px;top:753px;width:83px;height:19px;background:#efefef"></div>
<div class="t" style="left:361px;top:756.49px;font-size:12.0px;font-weight:bold;color:#1a1a1a;letter-spacing:0.7px">2030</div>
<div class="a" style="left:443px;top:753px;width:97px;height:19px;background:#f4f4f4"></div>
<div class="t" style="left:444px;top:756.49px;font-size:12.0px;font-weight:bold;color:#1a1a1a;">Report fact</div>
<div class="a" style="left:1211px;top:287px;width:16px;height:485px;background:#c4cccb"></div>
<div class="a" style="left:1211px;top:287px;width:16px;height:32px;background:#bfccc6"></div>
<div class="a" style="left:1211px;top:693px;width:16px;height:47px;background:#efefef"></div>
<div class="a" style="left:1211px;top:740px;width:16px;height:32px;background:#bfccc6"></div>
<svg class="a" style="left:1211px;top:287px" width="16" height="485" viewBox="1211 287 16 485"><g fill="#345a4c"><rect x="1214" y="290" width="10" height="1.7"/><path d="M1219 291.7 L1223.9 298 H1214.1z"/><path d="M1219 306.7 L1223.9 313.2 H1214.1z"/><path d="M1214.1 746.2 H1223.9 L1219 751.7z"/><path d="M1214.1 759.7 H1223.9 L1219 766z"/><rect x="1214" y="766.2" width="10" height="1.6"/></g></svg>
<svg class="a" style="left:305px;top:430px" width="40" height="40" viewBox="0 0 40 40"><circle cx="20" cy="20" r="20" fill="#b3bfbd"/><path d="M29.6 19.3 H13 M21.4 12.2 L12.9 19.3 L21.4 26.6" fill="none" stroke="#425a57" stroke-width="2.7" stroke-linecap="round" stroke-linejoin="round"/></svg>
</body></html>
